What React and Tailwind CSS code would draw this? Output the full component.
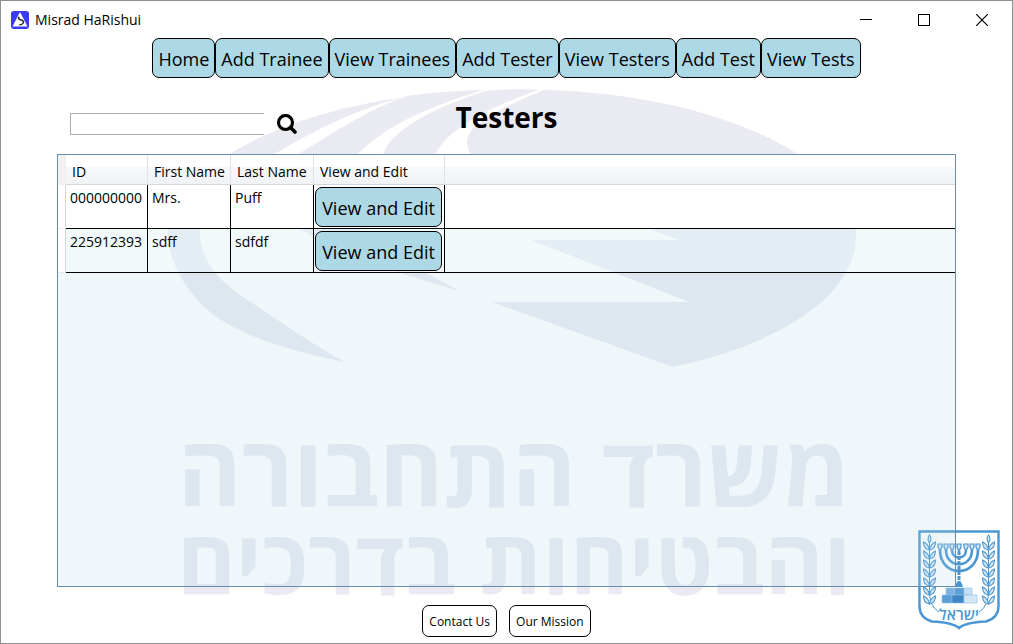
const NAV = ["Home", "Add Trainee", "View Trainees", "Add Tester", "View Testers", "Add Test", "View Tests"];

const TESTERS = [
  { id: "000000000", first: "Mrs.", last: "Puff" },
  { id: "225912393", first: "sdff", last: "sdfdf" },
];

function AppIcon() {
  return (
    <svg viewBox="0 0 18 18" className="size-[18px]" aria-hidden="true">
      <rect width="18" height="18" rx="3" fill="#3a3af5" />
      <path d="M9 1 16.500 15.500H1.500Z" fill="#fff" />
      <path d="M7.600 5.800c-.2 2 .2 2.600 1.800 3 2.800.5 3.800 1.900 2.600 3.500-.7 1-2 1.500-3.800 1.600" fill="none" stroke="#222" strokeWidth="1.400" />
    </svg>
  );
}

function Watermark() {
  return (
    <svg viewBox="0 0 1013 644" className="absolute inset-0 size-full" aria-hidden="true">
      <g fill="#eaeaf3">
        <path d="M400 97C340 106 280 122 228 154C188 176 165 203 167 236C170 262 178 276 190 292C216 330 282 350 344 362C310 343 280 322 250 302C220 283 199 262 199 232C200 200 238 170 273 154C310 132 345 113 400 97Z" />
        <path d="M407 95C430 92 455 90 483 89C440 103 390 120 357 154C325 184 325 205 370 237C396 256 430 276 460 291C400 274 345 255 298 228C250 200 262 174 297 154C335 131 365 110 407 95Z" />
        <path d="M485 90C503 89 520 88 539 89C500 103 450 124 435 154C428 170 440 190 470 210C425 205 380 190 383 154C390 128 440 105 485 90Z" />
        <path d="M544 89C720 94 857 160 857 236C857 295 780 345 673 367L492 302H690L532 240H680L478 160C464 152 464 136 474 127C490 112 515 102 544 89Z" />
      </g>
      <g fill="#eaeaf3" fontWeight="700" textAnchor="middle" className="font-['Open_Sans','Noto_Sans','DejaVu_Sans',sans-serif]">
        <text x="514" y="508" fontSize="98" direction="rtl">משרד התחבורה</text>
        <text x="514" y="596" fontSize="90" direction="rtl">והבטיחות בדרכים</text>
      </g>
    </svg>
  );
}

const LEAVES = [11, 20, 29, 38, 47, 56, 65];
const CUPS = [22, 28, 34, 41, 48, 54, 60];

function Branch() {
  return (
    <g>
      <path d="M11.500 8V60Q11 76 21 82" fill="none" stroke="#4a96d2" strokeWidth="1" />
      <g fill="#d3e6f5" stroke="#4a96d2" strokeWidth="1.100">
        <path d="M11.500 5q3 4 0 8q-3-4 0-8Z" />
        {LEAVES.map((y) => (
          <g key={y}>
            <path d={`M11.500 ${y + 9}q-6-1-6-8q5 2 6 8Z`} />
            <path d={`M11.500 ${y + 9}q6-1 6-8q-5 2-6 8Z`} />
          </g>
        ))}
      </g>
    </g>
  );
}

function Emblem() {
  return (
    <svg viewBox="0 0 82 100" className="absolute right-[12px] bottom-[13px] h-[100px] w-[82px]" role="img" aria-label="Emblem of Israel">
      <path d="M1.500 1.500H80.500V76Q80.500 88 68 91.500Q47 92.500 41 98Q35 92.500 14 91.500Q1.500 88 1.500 76Z" fill="#fff" stroke="#4a96d2" strokeWidth="2.400" />
      <Branch />
      <g transform="translate(82 0) scale(-1 1)"><Branch /></g>
      <g fill="none" stroke="#4a96d2" strokeWidth="2.600">
        <path d="M22 20C22 48 60 48 60 20" />
        <path d="M28 20C28 39 54 39 54 20" />
        <path d="M34 20C34 30 48 30 48 20" />
        <path d="M41 16V56" strokeWidth="3" strokeDasharray="4 1" />
      </g>
      <g fill="#d3e6f5" stroke="#4a96d2" strokeWidth="1.200">
        {CUPS.map((x) => <path key={x} d={`M${x - 2} 14H${x + 2}V17L${x} 21L${x - 2} 17Z`} />)}
      </g>
      <path d="M37 57q1-5 4-6q3 1 4 6Z" fill="#4a96d2" />
      <g stroke="#8fc0e6" strokeWidth=".6">
        <path d="M28 58H37V65H28Z" fill="#7fb4e0" />
        <path d="M37 58H46V65H37Z" fill="#5a9fd7" />
        <path d="M46 58H54V65H46Z" fill="#c5dff3" />
        <path d="M24 65H34V73H24Z" fill="#5a9fd7" />
        <path d="M34 65H46V73H34Z" fill="#3f86c6" />
        <path d="M46 65H59V73H46Z" fill="#d3e6f5" />
      </g>
      <text x="41" y="90" fontSize="15" fontWeight="600" fill="#4a96d2" textAnchor="middle" direction="rtl" className="font-['Open_Sans','Noto_Sans','DejaVu_Sans',sans-serif]">ישראל</text>
    </svg>
  );
}

function TitleBar() {
  return (
    <header className="flex h-[37px] items-center justify-between pl-[10px]">
      <div className="flex items-center gap-[6px] text-sm">
        <AppIcon />
        <span>Misrad HaRishui</span>
      </div>
      <div className="flex pr-px">
        <button type="button" aria-label="Minimize" className="flex h-[36px] w-[58px] items-center justify-center">
          <svg viewBox="0 0 12 12" className="size-[12px]" shapeRendering="crispEdges"><path d="M0 5.500H12" stroke="#000" /></svg>
        </button>
        <button type="button" aria-label="Maximize" className="flex h-[36px] w-[58px] items-center justify-center">
          <svg viewBox="0 0 12 12" className="size-[12px]" shapeRendering="crispEdges"><rect x=".5" y=".5" width="11" height="11" fill="none" stroke="#000" /></svg>
        </button>
        <button type="button" aria-label="Close" className="flex h-[36px] w-[58px] items-center justify-center">
          <svg viewBox="0 0 12 12" className="size-[12px]"><path d="M0 0 12 12M12 0 0 12" stroke="#000" strokeWidth="1.200" /></svg>
        </button>
      </div>
    </header>
  );
}

const BLUE_BUTTON = "h-[40px] rounded-[7px] border border-black bg-[#add8e6] px-[5px] pt-[2px] text-lg leading-none whitespace-nowrap";
const HEAD = "h-[30px] border-r border-b border-r-[#e2e3e6] border-b-[#d5d7da] bg-[linear-gradient(#fff_40%,#f7f8fa_40%,#f1f2f4)] pt-[4px] pl-[6px] text-left leading-none font-normal whitespace-nowrap";
const CELL = "border-r border-b border-black pl-[4px] pt-[3px] align-top";

export default function App() {
  return (
    <div className="relative flex min-h-screen flex-col border border-[#8f8f8f] bg-white font-['Open_Sans','Noto_Sans',sans-serif] text-black">
      <Watermark />
      <Emblem />
      <div className="relative flex grow flex-col">
        <TitleBar />
        <nav className="flex justify-center">
          {NAV.map((label) => <button key={label} type="button" className={BLUE_BUTTON}>{label}</button>)}
        </nav>
        <div className="grid h-[76px] grid-cols-[1fr_auto_1fr] items-center px-[56px]">
          <form className="flex items-center gap-[12px] pt-[16px] pl-[13px]">
            <input type="text" aria-label="Search testers" className="h-[22px] w-[194px] border border-r-0 border-[#abadb3] bg-white px-1 text-sm outline-none" />
            <button type="button" aria-label="Search">
              <svg viewBox="0 0 21 21" className="size-[21px]" fill="none" stroke="#000">
                <circle cx="9.500" cy="8.500" r="7" strokeWidth="3.200" />
                <path d="m14.500 13.500 4.500 4.500" strokeWidth="3.600" strokeLinecap="round" />
              </svg>
            </button>
          </form>
          <h1 className="pt-[2px] text-[28px] leading-none font-bold">Testers</h1>
        </div>
        <div className="mx-[56px] grow border border-[#688caf] bg-[#add8e6]/20">
          <table className="w-full border-separate border-spacing-0 text-sm">
            <colgroup>
              <col className="w-[8px]" />
              <col className="w-[82px]" />
              <col className="w-[83px]" />
              <col className="w-[83px]" />
              <col className="w-[131px]" />
              <col />
            </colgroup>
            <thead>
              <tr>
                <td className="bg-[#f0f0f0]" />
                <th scope="col" className={HEAD}>ID</th>
                <th scope="col" className={HEAD}>First Name</th>
                <th scope="col" className={HEAD}>Last Name</th>
                <th scope="col" className={HEAD}>View and Edit</th>
                <td className="border-b border-[#d5d7da] bg-[linear-gradient(#fff_40%,#f7f8fa_40%,#f1f2f4)]" />
              </tr>
            </thead>
            <tbody>
              {TESTERS.map((t) => (
                <tr key={t.id} className="h-[44px] bg-white even:bg-[#f8ffff]/25">
                  <td className="border-r border-b border-r-[#d5d7da] border-b-[#e4e6e8] bg-white" />
                  <td className={CELL}>{t.id}</td>
                  <td className={CELL}>{t.first}</td>
                  <td className={CELL}>{t.last}</td>
                  <td className="border-r border-b border-black py-px pr-[2px] pl-px">
                    <button type="button" className={`w-full ${BLUE_BUTTON}`}>View and Edit</button>
                  </td>
                  <td className="border-b border-black" />
                </tr>
              ))}
            </tbody>
          </table>
        </div>
        <footer className="flex justify-center gap-[12px] pt-[18px] pb-[6px] text-xs">
          {["Contact Us", "Our Mission"].map((label) => (
            <button key={label} type="button" className="h-[32px] rounded-[7px] border border-black bg-white px-[6px] pt-px">{label}</button>
          ))}
        </footer>
      </div>
    </div>
  );
}
